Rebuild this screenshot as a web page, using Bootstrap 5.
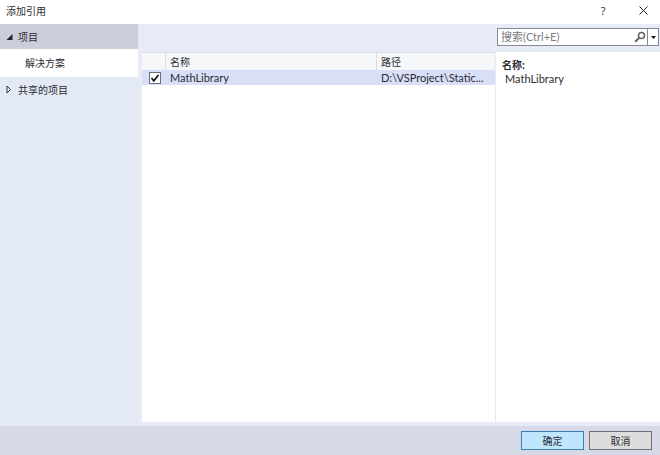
<!DOCTYPE html>
<html lang="zh-CN">
<head>
<meta charset="utf-8">
<meta name="viewport" content="width=device-width, initial-scale=1">
<title>添加引用</title>
<link href="https://cdn.jsdelivr.net/npm/bootstrap@5.3.0/dist/css/bootstrap.min.css" rel="stylesheet">
<style>
  body { font: 10px/14px "Open Sans", "Noto Sans CJK SC", sans-serif; color: #2b2b33; background: #e6ebf5; }
  button, input { font: inherit; color: inherit; }
  .titlebar { height: 24px; background: #fff; padding: 0 1px 3px 6px; }
  .titlebar h1 { font-size: 10px; line-height: 14px; font-weight: 400; }
  .tool-btn { width: 32px; height: 20px; border: 0; background: none; padding: 0; }
  .help-btn { font-size: 11px; }
  .latin { font-family: Lato, "Noto Sans CJK SC", sans-serif; font-size: 11px; }
  .sidebar { width: 138px; background: #e4eaf5; }
  .tree-item { height: 25px; padding: 0 6px; color: inherit; text-decoration: none; }
  .tree-item svg { width: 12px; height: 12px; flex: none; }
  .tree-open { background: #cccddb; }
  .tree-child { height: 28px; padding-left: 25px; background: #fff; }
  .toolbar-row { height: 28px; padding: 0 1px 2px; }
  .search { width: 162px; height: 18px; border: 1px solid #85899a; background: #fff; }
  .search input { border: 0; outline: 0; padding: 0 0 0 3px; min-width: 0; background: none; }
  .search input::placeholder { color: #7b7b80; opacity: 1; }
  .search button { border: 0; background: none; padding: 0; }
  .search .find { width: 16px; }
  .search .more { width: 11px; border-left: 1px solid #85899a; }
  .content { padding: 0 0 4px 4px; }
  .results { background: #fff; border-right: 1px solid #e8eaf0; }
  .ref-table { table-layout: fixed; width: 100%; border-collapse: separate; border-spacing: 0; }
  .ref-table th { height: 18px; padding: 0 4px; font-weight: 400; background: #f6f7f8; border: solid #dcdee5; border-width: 1px 1px 0 0; }
  .ref-table th:last-child { border-right: 0; }
  .ref-table td { height: 15px; padding: 0 4px; background: #d9dff6; }
  .ref-table .pick { width: 24px; }
  .ref-table .path { width: 118px; }
  .check { appearance: none; display: block; width: 12px; height: 12px; margin: 0 0 0 3px; border: 1px solid #6d6f78; background: #fff; }
  .check:checked { background: #fff url("data:image/svg+xml,%3Csvg xmlns='http://www.w3.org/2000/svg' viewBox='0 0 10 10'%3E%3Cpath d='M1.5 5l2.3 2.8L8.5 2' fill='none' stroke='%23111' stroke-width='1.7'/%3E%3C/svg%3E") center/10px 10px no-repeat; }
  .details { width: 164px; background: #fff; padding: 6px 6px; }
  .details dd { padding-left: 3px; }
  .actions { height: 29px; background: #d6dae8; padding: 0 8px 0 0; gap: 5px; }
  .dialog-btn { width: 63px; height: 19px; padding: 0; border: 1px solid #707078; background: #dddddd; }
  .dialog-btn.ok { border-color: #3c7fb1; background: #bee6fd; }
</style>
<script src="https://cdn.jsdelivr.net/npm/bootstrap@5.3.0/dist/js/bootstrap.bundle.min.js"></script>
</head>
<body>
<div class="d-flex flex-column vh-100">
  <header class="titlebar d-flex align-items-center">
    <h1 class="m-0 me-auto">添加引用</h1>
    <button type="button" class="tool-btn help-btn me-2" aria-label="帮助">?</button>
    <button type="button" class="tool-btn d-flex justify-content-center align-items-center" aria-label="关闭">
      <svg width="9" height="9" viewBox="0 0 9 9"><path d="M.5.5l8 8M8.5.5l-8 8" stroke="#222" stroke-width="1"/></svg>
    </button>
  </header>
  <div class="d-flex flex-grow-1">
    <nav class="sidebar flex-shrink-0">
      <a href="#" class="tree-item tree-open d-flex align-items-center"><svg viewBox="0 0 12 12"><path d="M6.500 3v6H.5z" fill="#222"/></svg><span>项目</span></a>
      <a href="#" class="tree-item tree-child d-flex align-items-center">解决方案</a>
      <a href="#" class="tree-item d-flex align-items-center"><svg viewBox="0 0 12 12"><path d="M1 2v7l3.500-3.500z" fill="none" stroke="#333"/></svg><span>共享的项目</span></a>
    </nav>
    <div class="flex-grow-1 d-flex flex-column">
      <div class="toolbar-row d-flex justify-content-end align-items-center">
        <div class="search d-flex" role="search">
          <input type="text" class="latin flex-grow-1" aria-label="搜索" placeholder="搜索(Ctrl+E)">
          <button type="button" class="find d-flex align-items-center justify-content-center" aria-label="搜索"><svg width="12" height="12" viewBox="0 0 12 12"><circle cx="7.500" cy="4.500" r="3" fill="none" stroke="#66666e" stroke-width="1.600"/><path d="M5.200 6.800L1.200 10.800" stroke="#66666e" stroke-width="2.200"/></svg></button>
          <button type="button" class="more d-flex align-items-center justify-content-center" aria-label="搜索选项"><svg width="5" height="3" viewBox="0 0 5 3"><path d="M0 0h5L2.500 3z" fill="#111"/></svg></button>
        </div>
      </div>
      <main class="content flex-grow-1 d-flex">
        <section class="results flex-grow-1">
          <table class="ref-table">
            <thead><tr><th class="pick" aria-label="选择"></th><th scope="col">名称</th><th scope="col" class="path">路径</th></tr></thead>
            <tbody><tr><td><input type="checkbox" class="check" aria-label="MathLibrary" checked></td><td class="latin">MathLibrary</td><td class="latin">D:\VSProject\Static...</td></tr></tbody>
          </table>
        </section>
        <aside class="details flex-shrink-0"><dl class="m-0"><dt>名称:</dt><dd class="latin m-0">MathLibrary</dd></dl></aside>
      </main>
    </div>
  </div>
  <footer class="actions d-flex justify-content-end align-items-center">
    <button type="button" class="dialog-btn ok">确定</button>
    <button type="button" class="dialog-btn">取消</button>
  </footer>
</div>
</body>
</html>
